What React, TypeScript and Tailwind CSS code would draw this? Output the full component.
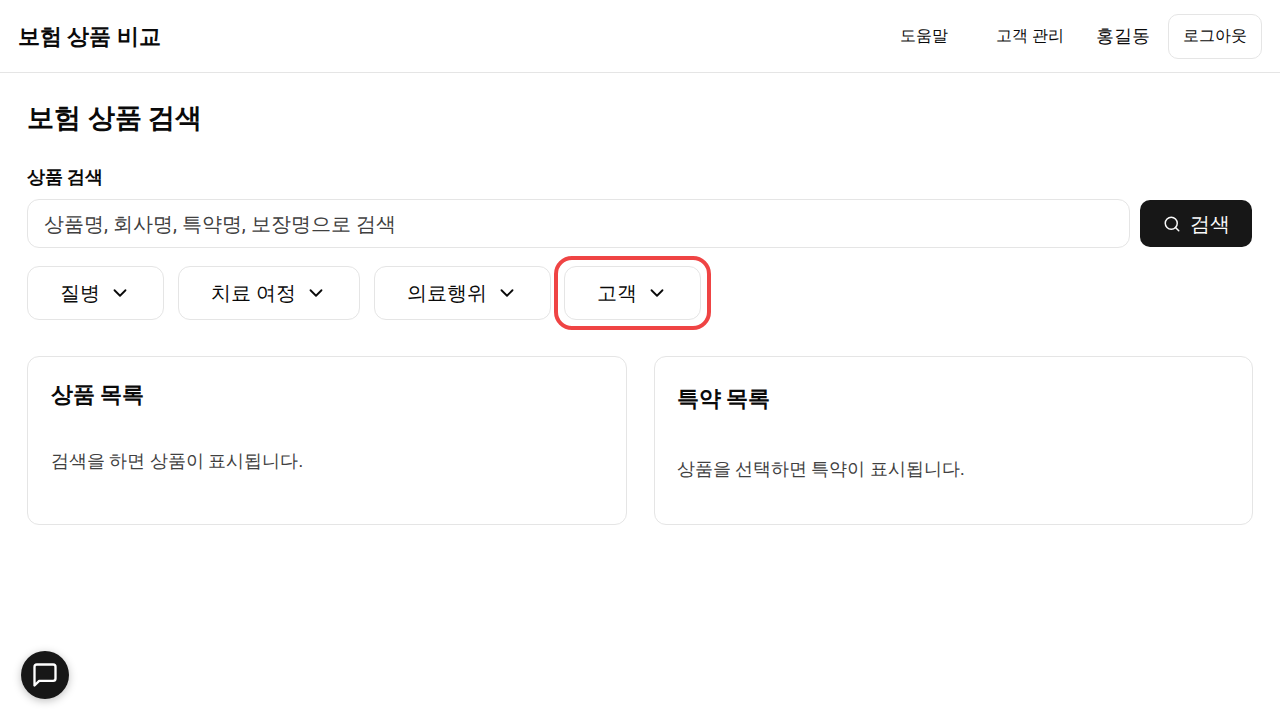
import { useState } from 'react';
import type { FormEvent } from 'react';
import { ChevronDown, Search } from 'lucide-react';

type Filter = {
  id: string;
  label: string;
};

const filters: Filter[] = [
  { id: 'disease', label: '질병' },
  { id: 'journey', label: '치료 여정' },
  { id: 'treatment', label: '의료행위' },
];

function FilterButton({ label }: { label: string }) {
  return (
    <button
      type="button"
      aria-haspopup="menu"
      className="flex h-[54px] items-center gap-[9px] rounded-xl border border-neutral-200 bg-white px-8 text-xl hover:bg-neutral-50"
    >
      {label}
      <ChevronDown className="size-[22px]" aria-hidden="true" />
    </button>
  );
}

function ChatIcon() {
  return (
    <svg
      viewBox="0 0 24 24"
      fill="none"
      stroke="currentColor"
      strokeWidth={2}
      strokeLinecap="round"
      strokeLinejoin="round"
      className="size-7"
      aria-hidden="true"
    >
      <path d="M21 15a2 2 0 0 1-2 2H7l-4 4V5a2 2 0 0 1 2-2h14a2 2 0 0 1 2 2z" />
    </svg>
  );
}

export default function App() {
  const [keyword, setKeyword] = useState('');

  const handleSearch = (e: FormEvent) => {
    e.preventDefault();
  };

  return (
    <div className="min-h-screen bg-white font-[Roboto,sans-serif] text-neutral-950">
      <header className="flex h-[73px] items-center justify-between border-b border-neutral-200 px-[18px]">
        <span className="text-[22px] font-bold">보험 상품 비교</span>
        <nav className="flex items-center">
          <a href="#help" className="mr-12 text-base">도움말</a>
          <a href="#customers" className="mr-8 text-base">고객 관리</a>
          <span className="mr-[18px] text-lg">홍길동</span>
          <button type="button" className="h-[45px] rounded-[10px] border border-neutral-200 px-[14px] text-base">
            로그아웃
          </button>
        </nav>
      </header>

      <main className="px-[27px] pt-6">
        <h1 className="text-[27px] leading-[42px] font-bold">보험 상품 검색</h1>

        <form onSubmit={handleSearch} className="mt-6">
          <label htmlFor="keyword" className="block text-lg leading-7 font-bold">상품 검색</label>
          <div className="mt-2 flex items-center gap-[10px] pr-px">
            <input
              id="keyword"
              type="text"
              value={keyword}
              onChange={(e) => setKeyword(e.target.value)}
              placeholder="상품명, 회사명, 특약명, 보장명으로 검색"
              className="h-[49px] min-w-0 flex-1 rounded-xl border border-neutral-200 px-4 text-xl placeholder:text-neutral-700"
            />
            <button
              type="submit"
              className="flex h-[47px] w-28 items-center justify-center gap-[9px] rounded-[10px] bg-neutral-900 text-xl text-neutral-50"
            >
              <Search className="size-[18px]" strokeWidth={2} aria-hidden="true" />
              검색
            </button>
          </div>
        </form>

        <div className="mt-2 flex items-center">
          <div className="flex gap-[14px]">
            {filters.map((filter) => (
              <FilterButton key={filter.id} label={filter.label} />
            ))}
          </div>
          <div className="ml-[3px] rounded-[18px] border-4 border-[#ef4444] p-[6px]">
            <FilterButton label="고객" />
          </div>
        </div>

        <div className="mt-[26px] grid grid-cols-2 gap-[27px]">
          <section className="h-[169px] rounded-xl border border-neutral-200 px-[23px] pt-[22px]">
            <h2 className="text-[22px] leading-8 font-bold">상품 목록</h2>
            <p className="mt-9 text-lg leading-7 text-neutral-700">검색을 하면 상품이 표시됩니다.</p>
          </section>
          <section className="h-[169px] rounded-xl border border-neutral-200 px-[22px] pt-[26px]">
            <h2 className="text-[22px] leading-8 font-bold">특약 목록</h2>
            <p className="mt-10 text-lg leading-7 text-neutral-700">상품을 선택하면 특약이 표시됩니다.</p>
          </section>
        </div>
      </main>

      <button
        type="button"
        aria-label="채팅 상담"
        className="fixed bottom-[21px] left-[21px] flex size-12 items-center justify-center rounded-full bg-neutral-900 text-white shadow-[0_2px_8px_rgba(0,0,0,0.25)]"
      >
        <ChatIcon />
      </button>
    </div>
  );
}
